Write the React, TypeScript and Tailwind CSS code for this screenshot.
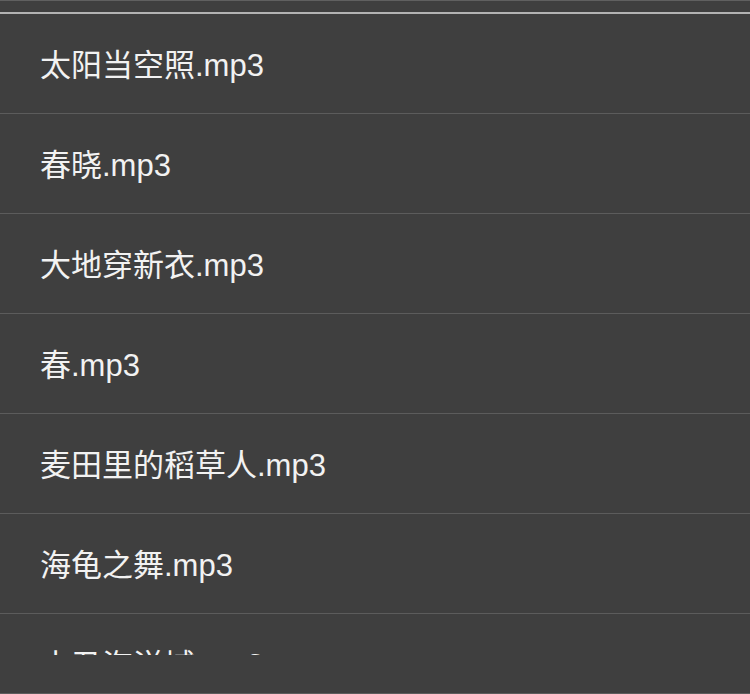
import React from "react";

const items = [
  "太阳当空照.mp3",
  "春晓.mp3",
  "大地穿新衣.mp3",
  "春.mp3",
  "麦田里的稻草人.mp3",
  "海龟之舞.mp3",
  "小丑海洋城.mp3",
];

export default function App() {
  return (
    <div
      className="w-[750px] h-[694px] bg-[#3f3f3f] flex flex-col overflow-hidden"
      style={{ fontFamily: '"Liberation Sans", "Noto Sans CJK SC", sans-serif' }}
    >
      <div className="h-px bg-[#606060]" />
      <div className="h-[11px]" />
      <div className="h-[2px] bg-[#b3b3b3]" />
      <div className="h-[641px] overflow-hidden flex flex-col shrink-0">
        {items.map((t) => (
          <div
            key={t}
            className="h-[100px] shrink-0 border-b border-[#5c5c5c] flex items-center pl-10 pt-[3px] text-[31px] leading-none text-[#f2f2f2]"
          >
            {t}
          </div>
        ))}
      </div>
      <div className="flex-1" />
      <div className="h-px bg-[#5c5c5c]" />
    </div>
  );
}
